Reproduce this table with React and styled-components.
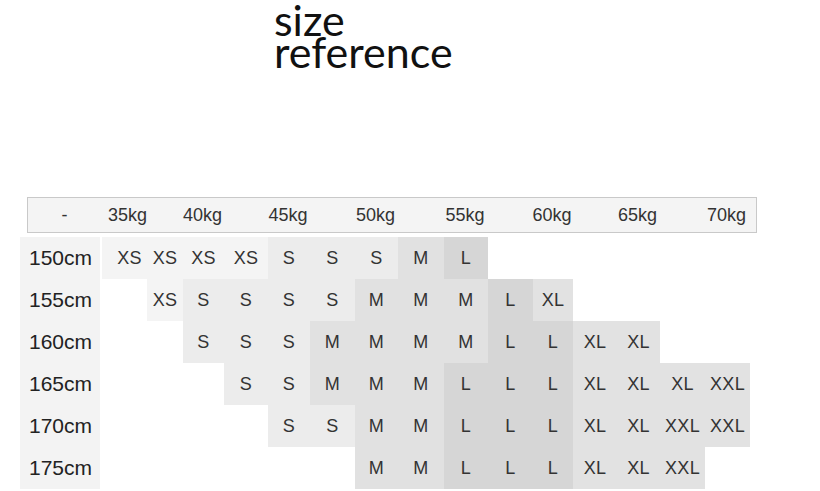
import styled, { createGlobalStyle } from 'styled-components';

const COLS = [82, 45, 36, 41, 44, 42, 45, 43, 46, 44, 45, 40, 44, 43, 45, 45];
const template = COLS.map(w => `${w}px`).join(' ');

const shades = {
    XS: '#f4f4f4',
    S: '#ececec',
    M: '#e1e1e1',
    L: '#d6d6d6',
    XL: '#e2e2e2',
    XXL: '#e2e2e2'
};

const weights = [
    { label: '35kg', col: 2 },
    { label: '40kg', col: 4 },
    { label: '45kg', col: 6 },
    { label: '50kg', col: 8 },
    { label: '55kg', col: 10 },
    { label: '60kg', col: 12 },
    { label: '65kg', col: 14 },
    { label: '70kg', col: 16 }
];

const _ = null;
const rows = [
    { height: '150cm', sizes: ['XS', 'XS', 'XS', 'XS', 'S', 'S', 'S', 'M', 'L', _, _, _, _, _, _] },
    { height: '155cm', sizes: [_, 'XS', 'S', 'S', 'S', 'S', 'M', 'M', 'M', 'L', 'XL', _, _, _, _] },
    { height: '160cm', sizes: [_, _, 'S', 'S', 'S', 'M', 'M', 'M', 'M', 'L', 'L', 'XL', 'XL', _, _] },
    { height: '165cm', sizes: [_, _, _, 'S', 'S', 'M', 'M', 'M', 'L', 'L', 'L', 'XL', 'XL', 'XL', 'XXL'] },
    { height: '170cm', sizes: [_, _, _, _, 'S', 'S', 'M', 'M', 'L', 'L', 'L', 'XL', 'XL', 'XXL', 'XXL'] },
    { height: '175cm', sizes: [_, _, _, _, _, _, 'M', 'M', 'L', 'L', 'L', 'XL', 'XL', 'XXL', _] }
];

export default function App() {
    return (
        <>
            <GlobalStyle />
            <Page>
                <Title>
                    <TitleLine>size</TitleLine>
                    <TitleLine>reference</TitleLine>
                </Title>
                <Chart>
                    <HeaderRow>
                        <HeadCell col={1}>-</HeadCell>
                        {weights.map(w => (
                            <HeadCell key={w.label} col={w.col}>{w.label}</HeadCell>
                        ))}
                    </HeaderRow>
                    <Body>
                        {rows.map(row => (
                            <Row key={row.height}>
                                <RowLabel>{row.height}</RowLabel>
                                {row.sizes.map((size, index) =>
                                    <Cell key={index} shade={size ? shades[size] : 'transparent'} first={index === 0}>
                                        {size}
                                    </Cell>
                                )}
                            </Row>
                        ))}
                    </Body>
                </Chart>
            </Page>
        </>
    );
}

const GlobalStyle = createGlobalStyle`
    body {
        margin: 0;
        background: #ffffff;
        font-family: "Liberation Sans", Arial, sans-serif;
    }
`;

const Page = styled.div`
    width: 820px;
    height: 491px;
    overflow: hidden;
    display: flex;
    flex-direction: column;
`;

const Title = styled.div`
    display: flex;
    flex-direction: column;
    padding: 3px 0 0 274px;
    height: 195px;
    box-sizing: border-box;
    font-family: "Lato", "DejaVu Sans", sans-serif;
    font-size: 43px;
    color: #111;
`;

const TitleLine = styled.div`
    height: 32px;
    line-height: 34px;
`;

const Chart = styled.div`
    display: flex;
    flex-direction: column;
    padding-left: 20px;
`;

const HeaderRow = styled.div`
    display: grid;
    grid-template-columns: ${COLS[0] - 9}px ${template.split(' ').slice(1).join(' ')};
    width: 728px;
    height: 34px;
    margin: 2px 0 0 7px;
    border: 1.5px solid #c9c9c9;
    background: #f4f4f4;
`;

const HeadCell = styled.div`
    grid-column: ${p => p.col};
    display: flex;
    align-items: center;
    justify-content: center;
    padding-left: ${p => p.col === 2 ? 8 : 0}px;
    font-size: 18px;
    color: #333;
    white-space: nowrap;
`;

const Body = styled.div`
    display: flex;
    flex-direction: column;
    margin-top: 4px;
`;

const Row = styled.div`
    display: grid;
    grid-template-columns: ${template};
    height: 42px;
`;

const RowLabel = styled.div`
    display: flex;
    align-items: center;
    padding-left: 9px;
    background: #f3f3f3;
    font-size: 21px;
    color: #222;
    width: 80px;
    box-sizing: border-box;
`;

const Cell = styled.div`
    display: flex;
    align-items: center;
    justify-content: center;
    padding-left: ${p => p.first ? 10 : 0}px;
    background: ${p => p.shade};
    font-size: 18px;
    letter-spacing: 0.3px;
    color: #333;
    white-space: nowrap;
`;
